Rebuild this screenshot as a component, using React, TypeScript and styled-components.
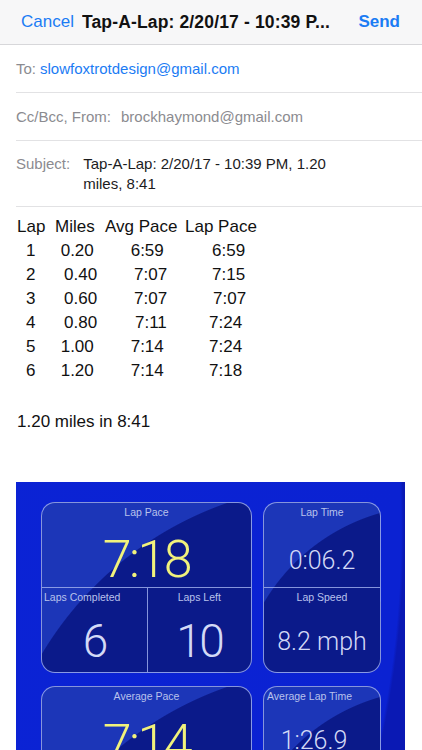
import React from 'react';
import styled, { createGlobalStyle } from 'styled-components';

const GlobalStyle = createGlobalStyle`
  html, body { margin: 0; padding: 0; background: #ffffff; }
  body {
    font-family: "Liberation Sans", Arial, sans-serif;
    overflow: hidden;
    -webkit-font-smoothing: antialiased;
  }
`;

const Screen = styled.div`
  width: 422px;
  height: 750px;
  overflow: hidden;
  background: #ffffff;
  display: flex;
  flex-direction: column;
  & > * { flex: none; }
`;

const NavBar = styled.header`
  height: 45px;
  box-sizing: border-box;
  border-bottom: 1px solid #d7d7da;
  background: #f7f7f8;
  display: flex;
  align-items: center;
  padding: 0 22px 0 21px;
  gap: 8px;
`;

const NavButton = styled.span<{ $strong?: boolean }>`
  font-size: 17px;
  color: #1b7cf4;
  font-weight: ${(p) => (p.$strong ? 700 : 400)};
  white-space: nowrap;
`;

const NavTitle = styled.span`
  flex: 1;
  font-size: 17.5px;
  letter-spacing: 0.15px;
  font-weight: 700;
  color: #111111;
  white-space: nowrap;
  overflow: hidden;
`;

const Field = styled.div<{ $tall?: boolean }>`
  margin-left: 16px;
  box-sizing: border-box;
  height: ${(p) => (p.$tall ? 66 : 48)}px;
  border-bottom: 1px solid #e2e2e4;
  display: flex;
  align-items: ${(p) => (p.$tall ? 'flex-start' : 'center')};
  padding-top: ${(p) => (p.$tall ? 13 : 0)}px;
  font-size: 15px;
  line-height: 19.5px;
`;

const FieldLabel = styled.span<{ $gap: number }>`
  color: #8b8b90;
  margin-right: ${(p) => p.$gap}px;
  white-space: nowrap;
`;

const FieldValue = styled.span<{ $tone: 'link' | 'muted' | 'plain' }>`
  color: ${(p) => (p.$tone === 'link' ? '#1b7cf4' : p.$tone === 'muted' ? '#8b8b90' : '#1c1c1e')};
`;

const Body = styled.section`
  padding: 8px 0 0 17px;
  font-size: 17px;
  line-height: 24px;
  color: #111111;
`;

const TableRow = styled.div`
  display: grid;
  grid-template-columns: 38px 50px 80px auto;
  white-space: nowrap;
`;

const Cell = styled.span<{ $indent?: number }>`
  padding-left: ${(p) => p.$indent ?? 0}px;
`;

const Summary = styled.p`
  margin: 27px 0 0;
`;

const Dashboard = styled.div`
  margin: 48px 0 0 16px;
  width: 389px;
  height: 300px;
  box-sizing: border-box;
  padding: 20px 0 0 25px;
  display: grid;
  grid-template-columns: 211px 118px;
  grid-template-rows: 171px 171px;
  column-gap: 11px;
  row-gap: 13px;
  background:
    radial-gradient(circle 988px at -600px 50px, #0b24d8 0, #0b22d2 985px, #0a19b4 988px);
`;

const Panel = styled.div<{ $narrow?: boolean }>`
  box-sizing: border-box;
  border: 1.5px solid rgba(165, 180, 240, 0.8);
  border-radius: 14px;
  overflow: hidden;
  display: grid;
  grid-template-rows: 85px 1fr;
  background: ${(p) =>
    p.$narrow
      ? 'radial-gradient(circle 198px at 170px 200px, #0b1a8a 0, #0b1a8a 197px, #1c36b8 198px)'
      : 'radial-gradient(circle 350px at 300px 330px, #0b1a8a 0, #0b1a8a 349px, #1c36b8 350px)'};
`;

const TopCell = styled.div`
  display: flex;
  flex-direction: column;
  align-items: center;
  border-bottom: 1.5px solid rgba(165, 180, 240, 0.8);
  padding: 2px 3px 0;
  min-width: 0;
`;

const Split = styled.div`
  display: grid;
  grid-template-columns: 1fr 1fr;
`;

const SubCell = styled.div<{ $divided?: boolean }>`
  display: flex;
  flex-direction: column;
  align-items: center;
  padding: 2px 2px 0;
  border-left: ${(p) => (p.$divided ? '1.5px solid rgba(165, 180, 240, 0.8)' : 'none')};
  min-width: 0;
`;

const Label = styled.span<{ $left?: boolean }>`
  align-self: ${(p) => (p.$left ? 'flex-start' : 'center')};
  font-family: "Liberation Sans", Arial, sans-serif;
  font-size: 10.5px;
  line-height: 14px;
  color: #b9c2ec;
  white-space: nowrap;
`;

const Value = styled.span<{ $size: number; $gold?: boolean; $offset: number; $shift?: number }>`
  font-family: Roboto, "Liberation Sans", sans-serif;
  font-weight: 300;
  font-size: ${(p) => p.$size}px;
  line-height: ${(p) => p.$size}px;
  margin-top: ${(p) => p.$offset}px;
  margin-right: ${(p) => p.$shift ?? 0}px;
  letter-spacing: ${(p) => (p.$size > 40 ? -2.5 : 0)}px;
  color: ${(p) => (p.$gold ? '#f1f27c' : '#d3d9f6')};
  white-space: nowrap;
`;

const laps = [
  ['1', '0.20', '6:59', '6:59', 5.7, 25.7, 27],
  ['2', '0.40', '7:07', '7:15', 9, 29, 27],
  ['3', '0.60', '7:07', '7:07', 9, 29, 28],
  ['4', '0.80', '7:11', '7:24', 9, 30, 24],
  ['5', '1.00', '7:14', '7:24', 5.7, 25.7, 24],
  ['6', '1.20', '7:14', '7:18', 5.7, 25.7, 24],
] as const;

export default function App() {
  return (
    <Screen>
      <GlobalStyle />
      <NavBar>
        <NavButton>Cancel</NavButton>
        <NavTitle>Tap-A-Lap: 2/20/17 - 10:39 P...</NavTitle>
        <NavButton $strong>Send</NavButton>
      </NavBar>

      <Field>
        <FieldLabel $gap={4}>To:</FieldLabel>
        <FieldValue $tone="link">slowfoxtrotdesign@gmail.com</FieldValue>
      </Field>
      <Field>
        <FieldLabel $gap={10}>Cc/Bcc, From:</FieldLabel>
        <FieldValue $tone="muted">brockhaymond@gmail.com</FieldValue>
      </Field>
      <Field $tall>
        <FieldLabel $gap={13}>Subject:</FieldLabel>
        <FieldValue $tone="plain">
          Tap-A-Lap: 2/20/17 - 10:39 PM, 1.20
          <br />
          miles, 8:41
        </FieldValue>
      </Field>

      <Body>
        <TableRow>
          <Cell>Lap</Cell>
          <Cell>Miles</Cell>
          <Cell>Avg Pace</Cell>
          <Cell>Lap Pace</Cell>
        </TableRow>
        {laps.map(([lap, miles, avg, pace, mi, ai, pi]) => (
          <TableRow key={lap}>
            <Cell $indent={9}>{lap}</Cell>
            <Cell $indent={mi}>{miles}</Cell>
            <Cell $indent={ai}>{avg}</Cell>
            <Cell $indent={pi}>{pace}</Cell>
          </TableRow>
        ))}
        <Summary>1.20 miles in 8:41</Summary>
      </Body>

      <Dashboard>
        <Panel>
          <TopCell>
            <Label>Lap Pace</Label>
            <Value $size={52} $gold $offset={15}>7:18</Value>
          </TopCell>
          <Split>
            <SubCell>
              <Label $left>Laps Completed</Label>
              <Value $size={46} $offset={14}>6</Value>
            </SubCell>
            <SubCell $divided>
              <Label>Laps Left</Label>
              <Value $size={46} $offset={14}>10</Value>
            </SubCell>
          </Split>
        </Panel>
        <Panel $narrow>
          <TopCell>
            <Label>Lap Time</Label>
            <Value $size={25} $offset={29}>0:06.2</Value>
          </TopCell>
          <SubCell>
            <Label>Lap Speed</Label>
            <Value $size={25} $offset={25}>8.2 mph</Value>
          </SubCell>
        </Panel>
        <Panel>
          <TopCell>
            <Label>Average Pace</Label>
            <Value $size={52} $gold $offset={15}>7:14</Value>
          </TopCell>
        </Panel>
        <Panel $narrow>
          <TopCell>
            <Label $left>Average Lap Time</Label>
            <Value $size={25} $offset={25} $shift={16}>1:26.9</Value>
          </TopCell>
        </Panel>
      </Dashboard>
    </Screen>
  );
}
